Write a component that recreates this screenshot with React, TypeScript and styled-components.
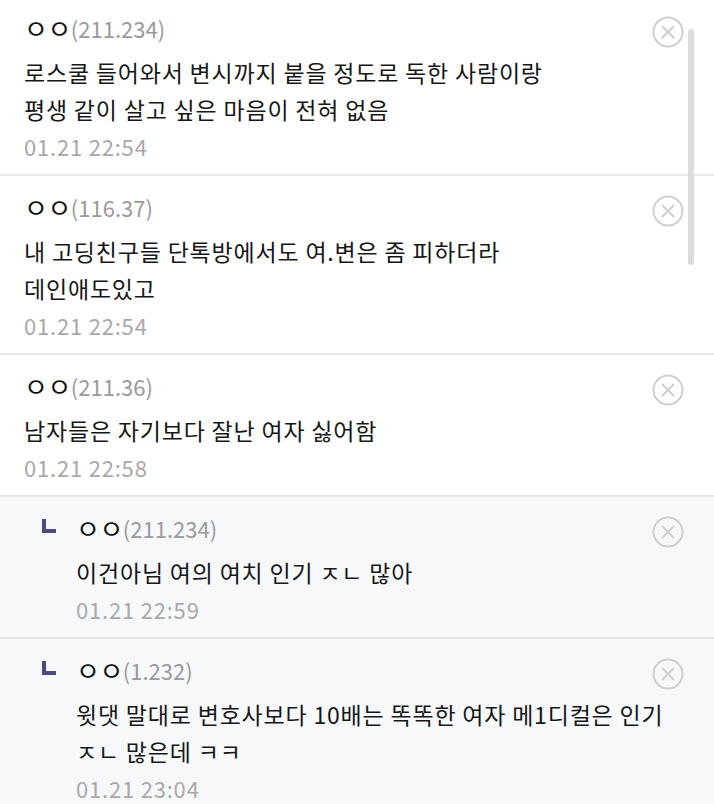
import React from 'react';
import styled, { createGlobalStyle } from 'styled-components';

const GlobalStyle = createGlobalStyle`
  html, body {
    margin: 0;
    padding: 0;
    background: #ffffff;
  }
  body {
    font-family: "Noto Sans CJK KR", "Noto Sans", sans-serif;
  }
`;

type Comment = {
  id: number;
  nick: string;
  ip: string;
  text: string;
  date: string;
  reply?: boolean;
};

const comments: Comment[] = [
  {
    id: 1,
    nick: 'ㅇㅇ',
    ip: '(211.234)',
    text: '로스쿨 들어와서 변시까지 붙을 정도로 독한 사람이랑\n평생 같이 살고 싶은 마음이 전혀 없음',
    date: '01.21 22:54',
  },
  {
    id: 2,
    nick: 'ㅇㅇ',
    ip: '(116.37)',
    text: '내 고딩친구들 단톡방에서도 여.변은 좀 피하더라\n데인애도있고',
    date: '01.21 22:54',
  },
  {
    id: 3,
    nick: 'ㅇㅇ',
    ip: '(211.36)',
    text: '남자들은 자기보다 잘난 여자 싫어함',
    date: '01.21 22:58',
  },
  {
    id: 4,
    nick: 'ㅇㅇ',
    ip: '(211.234)',
    text: '이건아님 여의 여치 인기 ㅈㄴ 많아',
    date: '01.21 22:59',
    reply: true,
  },
  {
    id: 5,
    nick: 'ㅇㅇ',
    ip: '(1.232)',
    text: '윗댓 말대로 변호사보다 10배는 똑똑한 여자 메1디컬은 인기\nㅈㄴ 많은데 ㅋㅋ',
    date: '01.21 23:04',
    reply: true,
  },
];

const DeleteIcon = () => (
  <svg width="32" height="32" viewBox="0 0 32 32" fill="none">
    <circle cx="16" cy="16" r="14.5" stroke="#cfcfcf" strokeWidth="2" />
    <path d="M10.5 10.5 L21.5 21.5 M21.5 10.5 L10.5 21.5" stroke="#cfcfcf" strokeWidth="2" strokeLinecap="round" />
  </svg>
);

const App = () => {
  return (
    <Page>
      <GlobalStyle />
      <CommentList>
        {comments.map(c => (
          <CommentItem key={c.id} $reply={!!c.reply}>
            {c.reply && (
              <ReplyGutter>
                <ReplyMark />
              </ReplyGutter>
            )}
            <CommentBody>
              <NameLine>
                <Nick>{c.nick}</Nick>
                <Ip>{c.ip}</Ip>
                <DeleteButton aria-label="삭제">
                  <DeleteIcon />
                </DeleteButton>
              </NameLine>
              <CommentText>{c.text}</CommentText>
              <DateText>{c.date}</DateText>
            </CommentBody>
          </CommentItem>
        ))}
      </CommentList>
      <ScrollThumb />
    </Page>
  );
};

export default App;

const Page = styled.div`
  position: relative;
  width: 714px;
  height: 804px;
  overflow: hidden;
  background: #ffffff;
`;

const CommentList = styled.ul`
  list-style: none;
  margin: -3px 0 0 0;
  padding: 0;
`;

const CommentItem = styled.li<{ $reply: boolean }>`
  display: flex;
  align-items: flex-start;
  padding: 12px 20px 9px ${p => (p.$reply ? '42px' : '24px')};
  background: ${p => (p.$reply ? '#f7f8fa' : '#ffffff')};
  border-bottom: 2px solid #e7e7e9;
`;

const ReplyGutter = styled.div`
  width: 34px;
  height: 37px;
  flex-shrink: 0;
  display: flex;
  align-items: center;
`;

const ReplyMark = styled.span`
  display: block;
  width: 10px;
  height: 10px;
  margin-top: -3px;
  border-left: 4px solid #4b4b80;
  border-bottom: 4px solid #4b4b80;
`;

const CommentBody = styled.div`
  flex: 1;
  min-width: 0;
`;

const NameLine = styled.div`
  display: flex;
  align-items: center;
  height: 37px;
  margin-bottom: 8px;
  font-size: 22px;
`;

const Nick = styled.span`
  font-size: 26px;
  letter-spacing: -0.5px;
  color: #111111;
`;

const Ip = styled.span`
  color: #9a9a9a;
`;

const CommentText = styled.div`
  font-size: 23px;
  letter-spacing: 0.8px;
  line-height: 37px;
  color: #161616;
  white-space: pre-line;
  word-break: keep-all;
`;

const DateText = styled.div`
  font-size: 22px;
  letter-spacing: 0.8px;
  line-height: 37px;
  color: #a8a8a8;
`;

const DeleteButton = styled.button`
  flex-shrink: 0;
  width: 32px;
  height: 32px;
  margin: 8px 10px 0 auto;
  padding: 0;
  border: none;
  background: none;
  display: flex;
  align-items: center;
  justify-content: center;
`;

const ScrollThumb = styled.div`
  position: absolute;
  left: 688px;
  top: 29px;
  width: 6px;
  height: 236px;
  border-radius: 3px;
  background: #dcdcdc;
`;
